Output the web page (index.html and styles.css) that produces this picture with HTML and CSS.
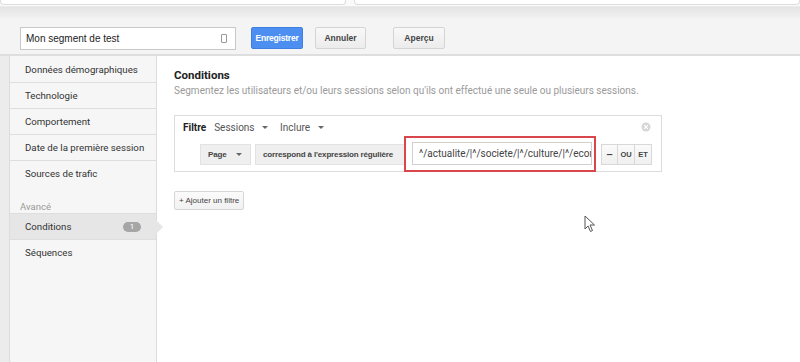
FILE: index.html
```html
<!DOCTYPE html>
<html lang="fr">
<head>
  <meta charset="UTF-8">
  <title>Segment - Conditions</title>
  <link rel="stylesheet" href="styles.css">
</head>
<body>

  <!-- bande du haut (liste des segments, coupée) -->
  <div class="top-strip">
    <div class="strip-box wide"></div>
    <div class="strip-box"></div>
  </div>
  <div class="shade"></div>

  <div class="toolbar">
    <div class="name-field">
      <span>Mon segment de test</span>
      <span class="name-icon"></span>
    </div>
    <button class="btn btn-blue">Enregistrer</button>
    <button class="btn btn-annuler">Annuler</button>
    <button class="btn btn-apercu">Aperçu</button>
  </div>

  <div class="layout">
    <div class="gutter"></div>

    <ul class="sidebar">
      <li class="item">Données démographiques</li>
      <li class="item">Technologie</li>
      <li class="item">Comportement</li>
      <li class="item">Date de la première session</li>
      <li class="item last">Sources de trafic</li>
      <li class="group">Avancé</li>
      <li class="item active">Conditions <span class="count">1</span></li>
      <li class="item">Séquences</li>
    </ul>

    <div class="main">
      <h3>Conditions</h3>
      <p class="sub">Segmentez les utilisateurs et/ou leurs sessions selon qu'ils ont effectué une seule ou plusieurs sessions.</p>

      <div class="filter">
        <div class="filter-head">
          <b>Filtre</b>
          <span class="menu">Sessions <i class="caret"></i></span>
          <span class="menu">Inclure <i class="caret"></i></span>
          <span class="close">
            <svg width="10" height="10" viewBox="0 0 10 10">
              <circle cx="5" cy="5" r="4.5" fill="#d6d6d6"/>
              <path d="M3.2 3.2 L6.8 6.8 M6.8 3.2 L3.2 6.8" stroke="#fff" stroke-width="1.2"/>
            </svg>
          </span>
        </div>
        <div class="filter-row">
          <div class="select page">Page <i class="caret"></i></div>
          <div class="select match">correspond à l'expression régulière <i class="caret"></i></div>
          <div class="highlight">
            <div class="value">^/actualite/|^/societe/|^/culture/|^/economie/</div>
          </div>
          <div class="logic">
            <span class="lbtn minus">&ndash;</span>
            <span class="lbtn">OU</span>
            <span class="lbtn">ET</span>
          </div>
        </div>
      </div>

      <button class="add">+ Ajouter un filtre</button>

      <svg class="cursor" width="12" height="18" viewBox="0 0 12 18">
        <path d="M1 1 L1 14 L4 11 L6.5 16.5 L8.5 15.5 L6 10 L10.5 10 Z" fill="#fff" stroke="#555" stroke-width="1"/>
      </svg>
    </div>
  </div>

</body>
</html>
```

FILE: styles.css
```css
* {
  box-sizing: border-box;
}

body {
  margin: 0;
  font-family: Roboto, Arial, sans-serif;
  font-size: 10px;
  color: #333;
  background-color: #fff;
  height: 362px;
  overflow: hidden;
  display: flex;
  flex-direction: column;
}

.top-strip {
  height: 6px;
  display: flex;
  gap: 8px;
  background: #fafafa;
}

.strip-box {
  flex: 1;
  height: 5px;
  background: #fff;
  border: 1px solid #ddd;
  border-top: none;
  border-radius: 0 0 4px 4px;
}

.strip-box.wide {
  flex: 0 0 346px;
}

.shade {
  height: 12px;
  background: linear-gradient(#e4e4e4, #f0f0f0);
  border-top: 1px solid #e9e9e9;
}

.toolbar {
  height: 38px;
  background: #f4f4f4;
  border-bottom: 2px solid #dedede;
  display: flex;
  align-items: flex-start;
  padding: 9px 0 0 20px;
}

.name-field {
  width: 216px;
  height: 23px;
  background: #fff;
  border: 1px solid #c8c8c8;
  display: flex;
  align-items: center;
  justify-content: space-between;
  padding: 0 8px 0 5px;
  font-family: Arial, "Liberation Sans", sans-serif;
  font-size: 10px;
  color: #222;
}

.name-icon {
  width: 6px;
  height: 9px;
  border: 1px solid #999;
  border-radius: 1px;
}

.btn {
  height: 22px;
  margin-left: 12px;
  padding: 0;
  font-family: Arial, "Liberation Sans", sans-serif;
  font-size: 8.5px;
  font-weight: bold;
  color: #444;
  background: linear-gradient(#f8f8f8, #ececec);
  border: 1px solid #d4d4d4;
  border-radius: 2px;
  white-space: nowrap;
}

.btn-blue {
  width: 52px;
  margin-left: 15px;
  letter-spacing: -0.2px;
  color: #fff;
  background: #4d8ff0;
  border-color: #3f7fe0;
}

.btn-annuler {
  width: 51px;
}

.btn-apercu {
  margin-left: 27px;
  width: 52px;
}

.layout {
  flex: 1;
  display: flex;
}

.gutter {
  width: 10px;
  background: #ececec;
  border-right: 1px solid #dcdcdc;
}

.sidebar {
  list-style: none;
  margin: 0;
  padding: 1px 0 0;
  width: 147px;
  background: #f6f6f6;
  border-right: 1px solid #dcdcdc;
}

.item {
  height: 26px;
  line-height: 26px;
  padding-left: 15px;
  border-bottom: 1px solid #dedede;
  color: #333;
  font-size: 9.7px;
  white-space: nowrap;
  position: relative;
}

.item.last {
  border-bottom: none;
}

.item:last-child {
  border-bottom: none;
}

.group {
  padding: 14px 0 0 10px;
  height: 27px;
  color: #999;
  font-size: 9.5px;
  border-bottom: 1px solid #dedede;
}

.item.active {
  background: #e6e6e6;
}

.item.active::after {
  content: "";
  position: absolute;
  right: -7px;
  top: 6px;
  width: 0;
  height: 0;
  border-top: 7px solid transparent;
  border-bottom: 7px solid transparent;
  border-left: 7px solid #e6e6e6;
}

.count {
  position: absolute;
  right: 15px;
  top: 8px;
  width: 18px;
  height: 10px;
  line-height: 10px;
  border-radius: 5px;
  background: #a6a6a6;
  color: #fff;
  font-size: 8px;
  text-align: center;
}

.main {
  flex: 1;
  position: relative;
  padding: 12px 0 0 17px;
}

.main h3 {
  margin: 0;
  font-size: 11.5px;
  line-height: 14px;
  font-weight: bold;
  color: #222;
}

.sub {
  margin: 2px 0 0;
  line-height: 13px;
  color: #9a9a9a;
  font-size: 10px;
}

.filter {
  width: 488px;
  height: 57px;
  margin-top: 18px;
  border: 1px solid #dcdcdc;
  padding: 5px 8px 0 8px;
}

.filter-head {
  display: flex;
  align-items: center;
  height: 12px;
  color: #555;
}

.filter-head b {
  color: #222;
  margin-right: 8px;
}

.menu {
  margin-right: 12px;
}

.caret {
  display: inline-block;
  width: 0;
  height: 0;
  margin-left: 5px;
  vertical-align: middle;
  border-left: 3px solid transparent;
  border-right: 3px solid transparent;
  border-top: 3px solid #666;
}

.close {
  margin-left: auto;
  margin-right: 2px;
  display: flex;
}

.filter-row {
  display: flex;
  align-items: center;
  margin: 3px 0 0 17px;
}

.select {
  height: 21px;
  line-height: 19px;
  background: #efefef;
  border: 1px solid #e2e2e2;
  font-family: Arial, "Liberation Sans", sans-serif;
  font-size: 8px;
  letter-spacing: -0.15px;
  font-weight: bold;
  color: #444;
  padding-left: 7px;
  white-space: nowrap;
  overflow: hidden;
}

.select .caret {
  margin-left: 11px;
}

.page .caret {
  margin-left: 7px;
}

.page {
  width: 51px;
}

.match {
  width: 150px;
  margin-left: 4px;
}

.highlight {
  width: 192px;
  height: 36px;
  border: 2px solid #d9474d;
  padding: 4px 2px 0 6px;
  margin-left: -1px;
}

.value {
  height: 23px;
  line-height: 21px;
  border: 1px solid #d0d0d0;
  padding-left: 6px;
  font-size: 10px;
  color: #444;
  white-space: nowrap;
  overflow: hidden;
}

.logic {
  display: flex;
  margin-left: 5px;
}

.lbtn {
  height: 21px;
  line-height: 19px;
  width: 18px;
  padding: 0;
  text-align: center;
  border: 1px solid #d8d8d8;
  margin-left: -1px;
  background: linear-gradient(#fafafa, #f0f0f0);
  font-family: Arial, "Liberation Sans", sans-serif;
  font-size: 7.5px;
  font-weight: bold;
  color: #444;
}

.lbtn.minus {
  width: 17px;
  margin-left: 0;
  font-size: 11px;
}

.add {
  display: block;
  margin-top: 19px;
  height: 19px;
  padding: 0 4px;
  font-family: Arial, "Liberation Sans", sans-serif;
  font-size: 8px;
  color: #444;
  background: linear-gradient(#fbfbfb, #f1f1f1);
  border: 1px solid #d6d6d6;
  border-radius: 2px;
}

.cursor {
  position: absolute;
  left: 427px;
  top: 159px;
}
```
